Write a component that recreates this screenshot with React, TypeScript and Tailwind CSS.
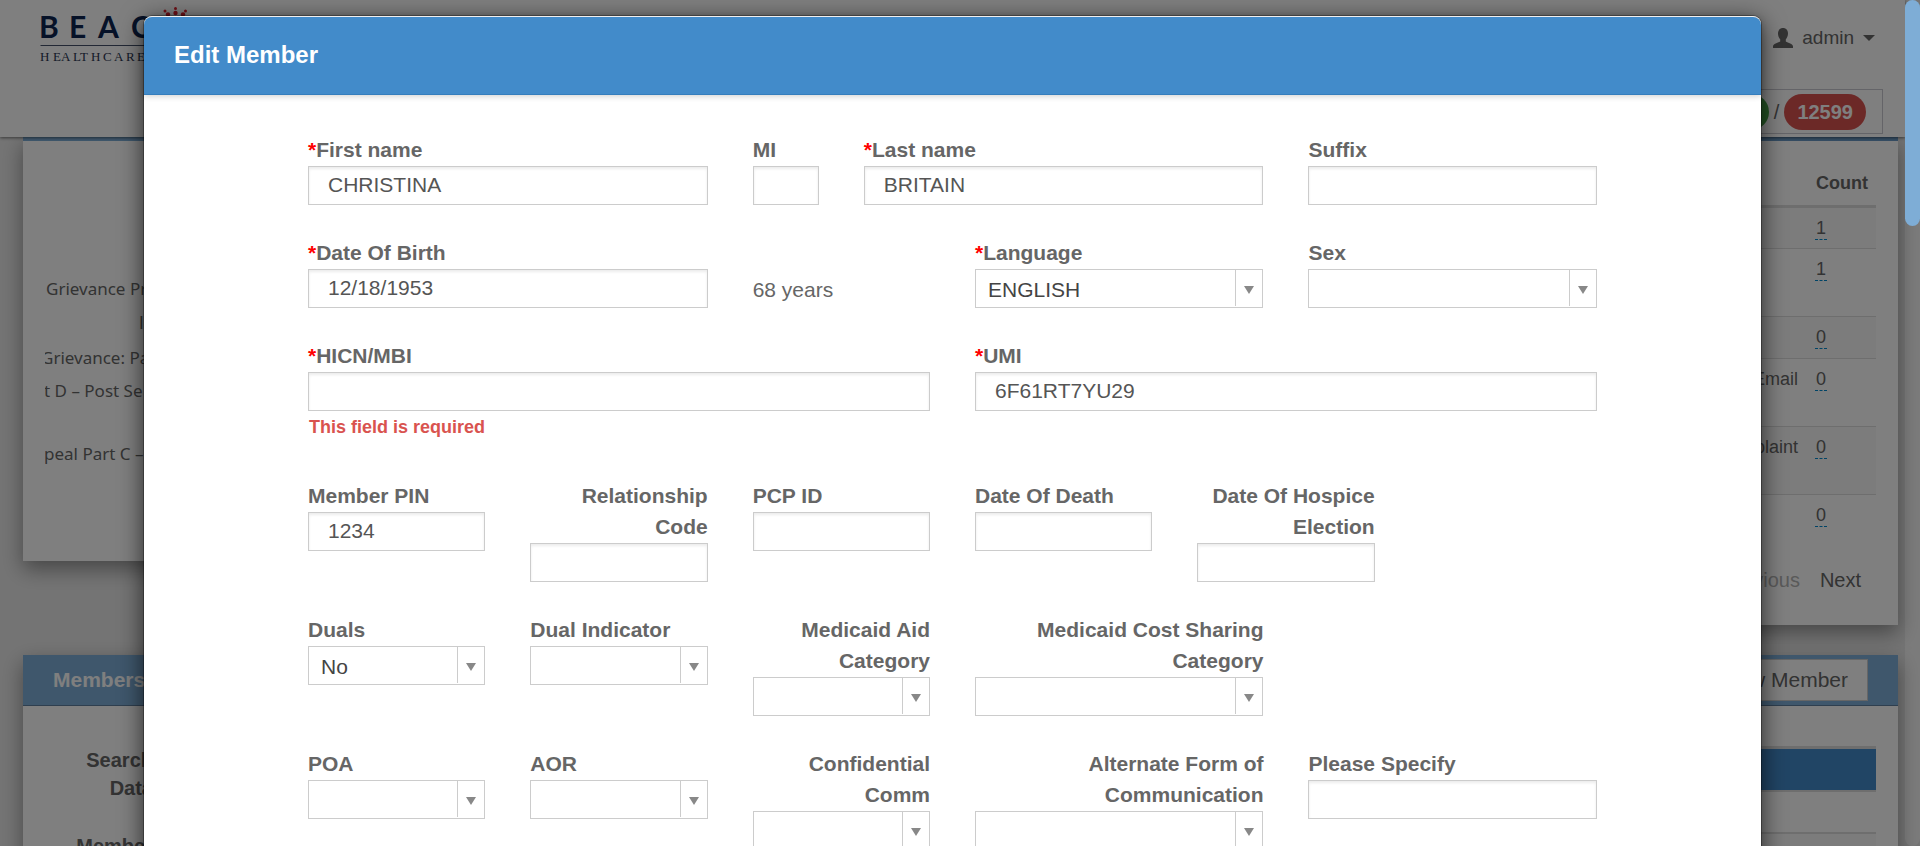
import { useId } from "react";
import type { ReactNode } from "react";

function BeaconLogo() {
  return (
    <svg width="260" height="64" viewBox="0 0 260 64" role="img" aria-label="Beacon Healthcare">
      <g fill="#e0202f">
        <circle cx="125" cy="11" r="1.5" />
        <circle cx="128" cy="14.500" r="2.200" />
        <circle cx="135.500" cy="8.500" r="1.500" />
        <circle cx="135.500" cy="13" r="2.200" />
        <circle cx="145.500" cy="11" r="1.500" />
        <circle cx="143" cy="14.500" r="2.200" />
      </g>
      <text
        x="-1 29 58 91 126 160"
        y="38"
        className="font-['Lato']"
        fontWeight="700"
        fontSize="30"
        fill="#0d2450"
      >
        BEACON
      </text>
      <path d="M0.500 45.500H200" stroke="#44506b" />
      <text
        x="0 13 21 33 40 51 63 74 86 97"
        y="61"
        className="font-['Liberation_Serif',serif]"
        fontSize="13"
        fill="#2a3550"
      >
        HEALTHCARE
      </text>
    </svg>
  );
}

function UserIcon() {
  return (
    <svg width="20" height="20" viewBox="0 0 20 20" fill="#666" aria-hidden="true">
      <path d="M10 0C13 0 15 2.200 15 5.500C15 8 14 10 12.800 11.200V13.400C15 15 20 15.500 20 18.500V20H0V18.500C0 15.500 5 15 7.200 13.400V11.200C6 10 5 8 5 5.500C5 2.200 7 0 10 0Z" />
    </svg>
  );
}

const chartLabels = [
  { x: 1, y: 154, text: "Grievance Pr", font: "font-['Noto_Sans',sans-serif]" },
  { x: 94, y: 188, text: "I", font: "font-['Lato',sans-serif]" },
  { x: -4, y: 223, text: "Grievance: Pa", font: "font-['Noto_Sans',sans-serif]" },
  { x: -1, y: 256, text: "t D – Post Se", font: "font-['Noto_Sans',sans-serif]" },
  { x: -1, y: 319, text: "peal Part C –", font: "font-['Noto_Sans',sans-serif]" },
];

const countRows = [
  { name: "", count: 1, height: "h-[42px]" },
  { name: "", count: 1, height: "h-[68px]" },
  { name: "", count: 0, height: "h-[42px]" },
  { name: "Email", count: 0, height: "h-[68px]" },
  { name: "Complaint", count: 0, height: "h-[68px]" },
  { name: "", count: 0, height: "h-[42px]" },
];

function Backdrop() {
  return (
    <div className="min-h-screen bg-[#e9e9e9] pr-[15px] text-[#666]">
      <header className="relative flex h-[137px] justify-between bg-white pl-10 shadow-[0_1px_3px_rgba(0,0,0,0.5)]">
        <BeaconLogo />
        <div className="flex flex-col items-end justify-between pt-6 pb-[3px]">
          <button className="mr-[30px] flex items-center gap-[9px] text-[19px] leading-7">
            <UserIcon />
            <span>admin</span>
            <svg width="12" height="6" viewBox="0 0 12 6" fill="#666" aria-hidden="true">
              <path d="M0 0H12L6 6Z" />
            </svg>
          </button>
          <div className="mr-[22px] flex h-[45px] items-center gap-[5px] border border-[#c9c9d0] pr-4 pl-3 text-xl">
            <span className="rounded-full bg-[#47a447] px-4 leading-9 font-bold text-white">1</span>
            <span>/</span>
            <span className="rounded-full bg-[#d9534f] px-[13px] leading-9 font-bold text-white">12599</span>
          </div>
        </div>
      </header>

      <main className="flex flex-col gap-[30px] pr-[7px] pl-[23px]">
        <div className="flex items-start gap-8">
          <section className="flex-1 border-t-4 border-[#7fafd9] bg-white px-[22px] shadow-[0_8px_20px_rgba(0,0,0,0.4)]">
            <svg className="block w-full" height="420">
              {chartLabels.map((l) => (
                <text key={l.text} x={l.x} y={l.y} fontSize="17" fill="#666" className={l.font}>
                  {l.text}
                </text>
              ))}
            </svg>
          </section>
          <section className="flex-1 border-t-4 border-[#6b9cc9] bg-white px-[22px] pt-4 pb-[31px] shadow-[0_8px_20px_rgba(0,0,0,0.4)]">
            <table className="w-full text-lg leading-6">
              <thead>
                <tr className="h-[49px] border-b-[3px] border-[#dcdcdc]">
                  <th />
                  <th className="w-[68px] pt-1 pl-2 text-left">Count</th>
                </tr>
              </thead>
              <tbody>
                {countRows.map((r, i) => (
                  <tr key={i} className="border-b border-[#dcdcdc] align-top last:border-0 odd:bg-[#f8f8f8]">
                    <td className={`pt-2 pr-[10px] text-right ${r.height}`}>{r.name}</td>
                    <td className="pt-2 pl-[7px]">
                      <a href="#count" className="border-b border-dashed border-[#08c] px-px pb-px">
                        {r.count}
                      </a>
                    </td>
                  </tr>
                ))}
              </tbody>
            </table>
            <nav className="mt-[30px] flex justify-end gap-5 pr-[15px] text-xl leading-7">
              <button className="text-[#b4b4b4]">Previous</button>
              <button>Next</button>
            </nav>
          </section>
        </div>

        <section className="bg-white shadow-[0_8px_20px_rgba(0,0,0,0.4)]">
          <div className="flex h-[51px] items-center justify-between border-b border-[#5f7f9f] bg-[#7fafd9] px-[30px] text-[21px]">
            <h2 className="font-bold text-white">Members</h2>
            <button className="h-[42px] border border-[#ccc] bg-white px-[19px]">New Member</button>
          </div>
          <div className="flex px-[22px] pt-10">
            <div className="flex w-[108px] flex-col gap-[30px] text-right text-xl leading-7 font-bold">
              <label htmlFor="search-data">Search Data</label>
              <label htmlFor="search-member">Member</label>
            </div>
            <div className="flex flex-1 flex-col gap-10 pl-6">
              <input id="search-data" className="h-9 w-64 border border-[#ccc]" />
              <input id="search-member" className="h-9 w-64 border border-[#ccc]" />
            </div>
            <div className="flex-1">
              <div className="h-11 border-t-[3px] border-[#dcdcdc] bg-[#428bca]" />
              <div className="h-[42px] border-t-2 border-[#dcdcdc]" />
              <div className="h-[42px] border-t-2 border-[#dcdcdc] bg-[#f8f8f8]" />
            </div>
          </div>
        </section>
      </main>
    </div>
  );
}

interface FieldProps {
  label: string;
  span: string;
  value?: string;
  required?: boolean;
  error?: string;
}

function FieldLabel({ id, required, children }: { id: string; required?: boolean; children: ReactNode }) {
  return (
    <label htmlFor={id} className="pb-px text-right text-[21px] leading-[31px] font-bold text-[#666]">
      {required && <span className="text-[#f00]">*</span>}
      {children}
    </label>
  );
}

function TextField({ label, span, value = "", required, error }: FieldProps) {
  const id = useId();
  return (
    <div className={`flex flex-col items-start ${span}`}>
      <FieldLabel id={id} required={required}>
        {label}
      </FieldLabel>
      <input
        id={id}
        type="text"
        defaultValue={value}
        className="h-[39px] w-full border border-[#ccc] bg-white px-[19px] pb-[2px] text-[21px] text-[#555] shadow-[inset_0_2px_3px_rgba(0,0,0,0.08)] outline-none"
      />
      {error && <p className="pt-px pb-[5px] pl-px text-lg leading-[31px] font-bold text-[#d9534f]">{error}</p>}
    </div>
  );
}

function SelectField({ label, span, value = "", required }: FieldProps) {
  const id = useId();
  return (
    <div className={`flex flex-col items-start ${span}`}>
      <FieldLabel id={id} required={required}>
        {label}
      </FieldLabel>
      <div className="relative w-full">
        <select
          id={id}
          defaultValue={value}
          className="block h-[39px] w-full appearance-none border border-[#ccc] bg-white pt-[2px] pr-8 pl-3 text-[21px] text-[#444] outline-none"
        >
          <option>{value}</option>
        </select>
        <span className="pointer-events-none absolute top-px right-px bottom-[2px] flex w-[27px] items-center justify-center border-l border-[#ccc] pt-[3px]">
          <svg width="10" height="8" viewBox="0 0 10 8" fill="#888" aria-hidden="true">
            <path d="M0 0H10L5 8Z" />
          </svg>
        </span>
      </div>
    </div>
  );
}

function Row({ children }: { children: ReactNode }) {
  return <div className="grid grid-cols-12 gap-x-[45px]">{children}</div>;
}

function EditMemberDialog() {
  return (
    <div
      role="dialog"
      aria-labelledby="dialog-title"
      className="rounded-lg border-t border-white bg-white shadow-[0_0_0_1px_rgba(0,0,0,0.3),0_5px_24px_rgba(0,0,0,0.7)]"
    >
      <header className="rounded-t-lg border-b border-[#357ebd] bg-[#428bca] px-[30px] pt-[23px] pb-6 shadow-[0_1px_6px_rgba(0,0,0,0.2)]">
        <h1 id="dialog-title" className="text-2xl leading-[30px] font-bold text-white">
          Edit Member
        </h1>
      </header>
      <form className="flex flex-col gap-8 px-[164px] pt-[39px] pb-10">
        <Row>
          <TextField label="First name" span="col-span-4" value="CHRISTINA" required />
          <TextField label="MI" span="col-span-1" />
          <TextField label="Last name" span="col-span-4" value="BRITAIN" required />
          <TextField label="Suffix" span="col-span-3" />
        </Row>
        <Row>
          <TextField label="Date Of Birth" span="col-span-4" value="12/18/1953" required />
          <p className="col-span-2 pt-[37px] text-[21px] leading-[31px] text-[#666]">68 years</p>
          <SelectField label="Language" span="col-span-3" value="ENGLISH" required />
          <SelectField label="Sex" span="col-span-3" />
        </Row>
        <Row>
          <TextField label="HICN/MBI" span="col-span-6" required error="This field is required" />
          <TextField label="UMI" span="col-span-6" value="6F61RT7YU29" required />
        </Row>
        <Row>
          <TextField label="Member PIN" span="col-span-2" value="1234" />
          <TextField label="Relationship Code" span="col-span-2" />
          <TextField label="PCP ID" span="col-span-2" />
          <TextField label="Date Of Death" span="col-span-2" />
          <TextField label="Date Of Hospice Election" span="col-span-2" />
        </Row>
        <Row>
          <SelectField label="Duals" span="col-span-2" value="No" />
          <SelectField label="Dual Indicator" span="col-span-2" />
          <SelectField label="Medicaid Aid Category" span="col-span-2" />
          <SelectField label="Medicaid Cost Sharing Category" span="col-span-3" />
        </Row>
        <Row>
          <SelectField label="POA" span="col-span-2" />
          <SelectField label="AOR" span="col-span-2" />
          <SelectField label="Confidential Comm" span="col-span-2" />
          <SelectField label="Alternate Form of Communication" span="col-span-3" />
          <TextField label="Please Specify" span="col-span-3" />
        </Row>
      </form>
    </div>
  );
}

export default function App() {
  return (
    <div className="relative h-screen overflow-hidden font-['Liberation_Sans',Arial,sans-serif]">
      <Backdrop />
      <div className="absolute inset-0 overflow-hidden bg-black/50 pt-4 pr-[159px] pl-36">
        <EditMemberDialog />
      </div>
      <div className="absolute inset-y-0 right-0 w-[15px] rounded-full bg-white/5">
        <div className="h-[226px] rounded-full bg-[#7eadd6]" />
      </div>
    </div>
  );
}
